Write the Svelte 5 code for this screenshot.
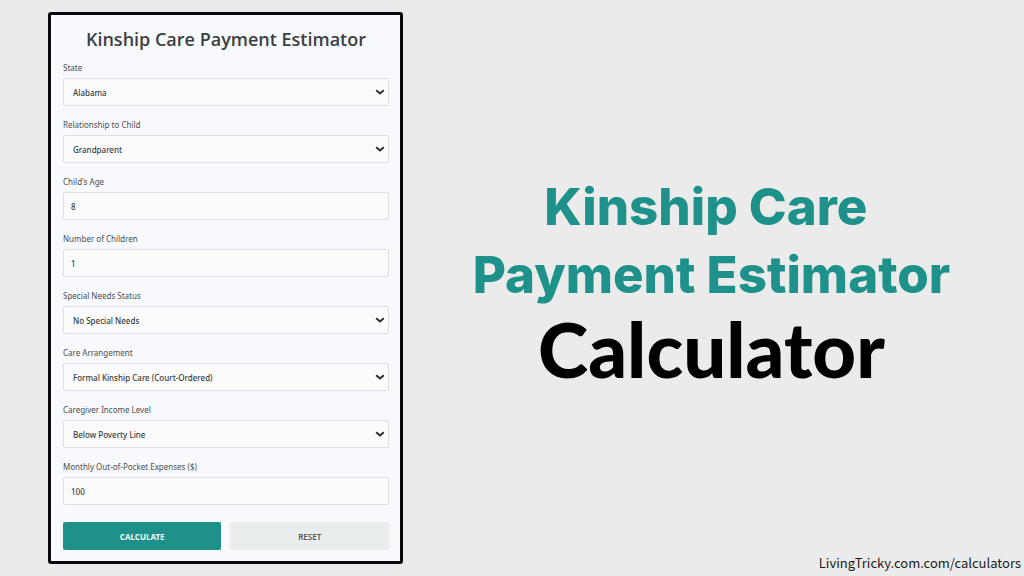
<script lang="ts">
  type Field = {
    id: string
    label: string
    options?: string[]
    initial: string | number
  }

  const fields: Field[] = [
    {
      id: "state",
      label: "State",
      options: ["Alabama", "Alaska", "Arizona", "Arkansas", "California"],
      initial: "Alabama",
    },
    {
      id: "relationship",
      label: "Relationship to Child",
      options: ["Grandparent", "Aunt/Uncle", "Sibling", "Other Relative"],
      initial: "Grandparent",
    },
    { id: "age", label: "Child's Age", initial: 8 },
    { id: "children", label: "Number of Children", initial: 1 },
    {
      id: "needs",
      label: "Special Needs Status",
      options: ["No Special Needs", "Moderate Needs", "Severe Needs"],
      initial: "No Special Needs",
    },
    {
      id: "care",
      label: "Care Arrangement",
      options: ["Formal Kinship Care (Court-Ordered)", "Informal Kinship Care"],
      initial: "Formal Kinship Care (Court-Ordered)",
    },
    {
      id: "income",
      label: "Caregiver Income Level",
      options: ["Below Poverty Line", "Low Income", "Middle Income"],
      initial: "Below Poverty Line",
    },
    { id: "expenses", label: "Monthly Out-of-Pocket Expenses ($)", initial: 100 },
  ]

  const defaults = () => Object.fromEntries(fields.map((f) => [f.id, f.initial]))

  let values: Record<string, string | number> = $state(defaults())

  function reset() {
    values = defaults()
  }
</script>

<main class="page">
  <form class="card" onsubmit={(e) => e.preventDefault()}>
    <h2>Kinship Care Payment Estimator</h2>

    {#each fields as field (field.id)}
      <div class="field">
        <label for={field.id}>{field.label}</label>
        {#if field.options}
          <div class="select">
            <select id={field.id} bind:value={values[field.id]}>
              {#each field.options as option}
                <option value={option}>{option}</option>
              {/each}
            </select>
            <svg viewBox="0 0 10 8" aria-hidden="true">
              <path d="M1.2 2.2 5 5.4 8.8 2.2" />
            </svg>
          </div>
        {:else}
          <input id={field.id} type="number" min="0" bind:value={values[field.id]} />
        {/if}
      </div>
    {/each}

    <div class="actions">
      <button class="primary" type="submit">CALCULATE</button>
      <button type="button" onclick={reset}>RESET</button>
    </div>
  </form>

  <section class="hero">
    <h1>
      <span>{"Kinship Care "}</span>
      <span>Payment Estimator</span>
      <strong>Calculator</strong>
    </h1>
  </section>

  <a class="site" href="#calculators">LivingTricky.com.com/calculators</a>
</main>

<style>
  :global(body) {
    background: #ebebeb;
  }

  .page {
    position: relative;
    display: grid;
    grid-template-columns: 4fr 7fr;
    box-sizing: border-box;
    min-height: 100vh;
    padding: 12px 0 12px 48px;
    font-family: "Noto Sans", "Open Sans", sans-serif;
  }

  .card {
    box-sizing: border-box;
    padding: 12px 11px 11px 12px;
    border: 3px solid #08090b;
    border-radius: 3px;
    background: #f8f9fc;
    color: #3c4043;
  }

  h2 {
    margin: 0 0 11px;
    font-family: "Open Sans", "Noto Sans", sans-serif;
    font-size: 18px;
    font-weight: 600;
    line-height: 24px;
    text-align: center;
  }

  .field {
    margin-bottom: 13px;
  }

  label {
    display: block;
    margin-bottom: 4px;
    font-size: 8px;
    font-weight: 400;
    line-height: 12px;
    color: #4a4e52;
  }

  input,
  select {
    display: block;
    box-sizing: border-box;
    width: 100%;
    height: 28px;
    margin: 0;
    padding: 0 7px;
    border: 1px solid #dcdfe2;
    border-radius: 2px;
    outline: none;
    background: #fbfbfc;
    color: #3a3d40;
    font-family: inherit;
    font-size: 8px;
    font-weight: 500;
    appearance: none;
  }

  select {
    padding: 0 24px 0 9px;
  }

  input::-webkit-inner-spin-button {
    appearance: none;
  }

  input:focus,
  select:focus {
    border-color: #1f918b;
  }

  .select {
    position: relative;
  }

  .select svg {
    position: absolute;
    top: 10px;
    right: 4px;
    width: 10px;
    height: 8px;
    fill: none;
    stroke: #2b2d30;
    stroke-width: 2;
    pointer-events: none;
  }

  .actions {
    display: grid;
    grid-template-columns: 1fr 1fr;
    gap: 9px;
    margin-top: 17px;
  }

  button {
    height: 28px;
    padding: 0;
    border: 0;
    border-radius: 2px;
    background: #e9edee;
    color: #55595c;
    font-family: inherit;
    font-size: 8px;
    font-weight: 600;
    cursor: pointer;
  }

  .primary {
    background: #1f918b;
    color: #f1f9f8;
    font-weight: 700;
  }

  .hero {
    align-self: center;
    padding: 0 4px 14px 0;
    text-align: center;
  }

  h1 {
    margin: 0;
    font-family: Inter, "Open Sans", sans-serif;
    font-size: 51px;
    font-weight: 800;
    line-height: 68px;
    color: #1f918b;
  }

  h1 span,
  h1 strong {
    display: block;
    white-space: pre;
  }

  h1 strong {
    font-family: Lato, "Open Sans", sans-serif;
    font-size: 76px;
    font-weight: 900;
    line-height: 80px;
    color: #000;
  }

  .site {
    position: absolute;
    right: 3px;
    bottom: 3px;
    font-family: "Noto Sans CJK SC", "Open Sans", sans-serif;
    font-size: 13px;
    line-height: 20px;
    color: #1b1b1b;
    text-decoration: none;
  }
</style>
